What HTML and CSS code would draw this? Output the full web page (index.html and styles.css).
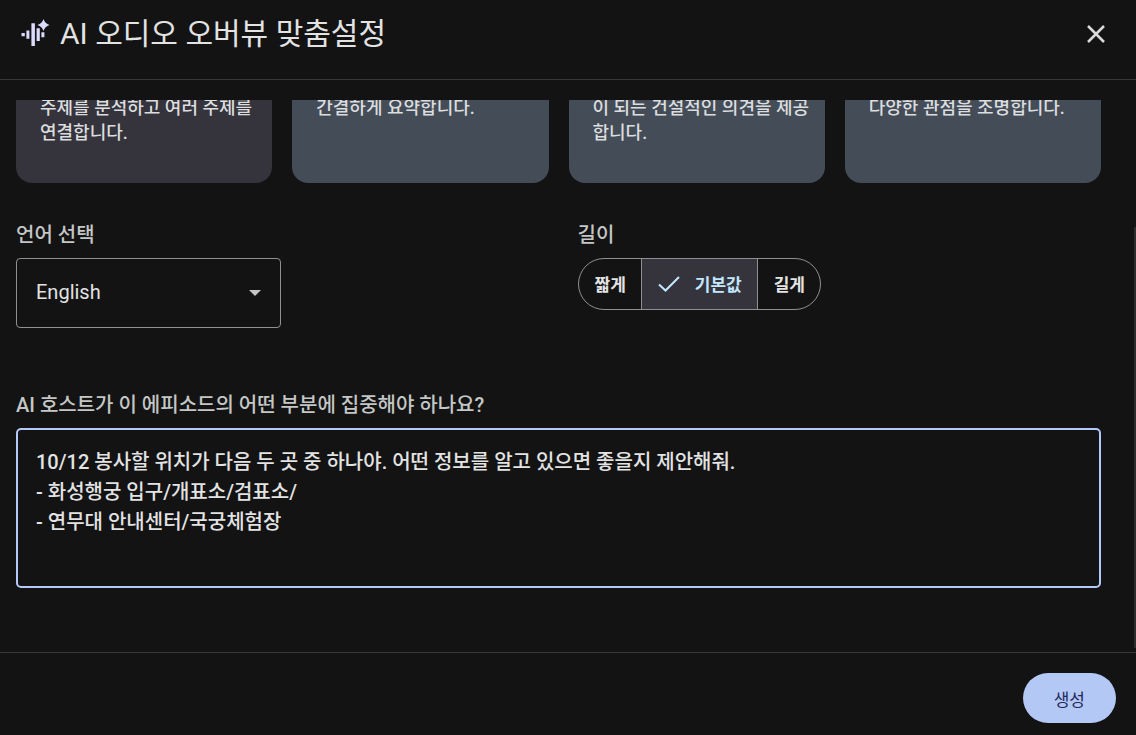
FILE: index.html
```html
<!DOCTYPE html>
<html lang="ko">
<head>
<meta charset="utf-8">
<meta name="viewport" content="width=device-width, initial-scale=1">
<title>AI 오디오 오버뷰 맞춤설정</title>
<link rel="stylesheet" href="styles.css">
</head>
<body>
<form class="dialog">
  <header class="dialog-header">
    <svg class="logo" viewBox="0 0 30 30" aria-hidden="true">
      <path d="M1.5 14h3.3v3.3H1.5zM6.4 11.5h3v8.2h-3zM11.4 4.2h3.5v22.8h-3.5zM16.6 9.2h3.2v12.8h-3.2zM21.4 13.2h3v5h-3z"/>
      <path d="M23.5 0Q24.9 4.6 29.5 6Q24.9 7.4 23.5 12Q22.1 7.4 17.5 6Q22.1 4.6 23.5 0z"/>
    </svg>
    <h1 class="title">AI 오디오 오버뷰 맞춤설정</h1>
    <button class="close" type="button" aria-label="닫기">
      <svg viewBox="0 0 20 20" aria-hidden="true"><path d="M2 2l16 16M18 2L2 18"/></svg>
    </button>
  </header>
  <main class="dialog-body">
    <div class="cards">
      <button class="card card-selected" type="button">주제를 분석하고 여러 주제를 연결합니다.</button>
      <button class="card" type="button">간결하게 요약합니다.</button>
      <button class="card" type="button">이 되는 건설적인 의견을 제공합니다.</button>
      <button class="card" type="button">다양한 관점을 조명합니다.</button>
    </div>
    <div class="options">
      <div class="field">
        <label class="label" for="language">언어 선택</label>
        <div class="select-wrap">
          <select class="select" id="language"><option>English</option></select>
          <svg class="arrow" viewBox="0 0 12 6" aria-hidden="true"><path d="M0 0h12L6 6z"/></svg>
        </div>
      </div>
      <div class="field">
        <span class="label" id="length-label">길이</span>
        <div class="segments" role="radiogroup" aria-labelledby="length-label">
          <label class="segment"><input class="radio" type="radio" name="length">짧게</label>
          <label class="segment segment-on"><input class="radio" type="radio" name="length" checked><svg class="check" viewBox="0 0 22 18" aria-hidden="true"><path d="M1 10.5l6.5 6L21 3"/></svg>기본값</label>
          <label class="segment"><input class="radio" type="radio" name="length">길게</label>
        </div>
      </div>
    </div>
    <div class="field prompt">
      <label class="label" for="focus">AI 호스트가 이 에피소드의 어떤 부분에 집중해야 하나요?</label>
      <textarea class="textarea" id="focus" rows="4">10/12 봉사할 위치가 다음 두 곳 중 하나야. 어떤 정보를 알고 있으면 좋을지 제안해줘.
- 화성행궁 입구/개표소/검표소/
- 연무대 안내센터/국궁체험장</textarea>
    </div>
    <div class="scroll-thumb"></div>
  </main>
  <footer class="dialog-footer">
    <button class="submit" type="submit">생성</button>
  </footer>
</form>
</body>
</html>
```

FILE: styles.css
```css
* { box-sizing: border-box; }
body {
  margin: 0;
  background: #131314;
  color: #e3e3e3;
  font-family: Roboto, "Noto Sans CJK KR", sans-serif;
  font-size: 20px;
}
button, select, textarea { font: inherit; color: inherit; }
.dialog { display: flex; flex-direction: column; min-height: 100vh; }
.dialog-header {
  display: flex;
  align-items: center;
  gap: 10px;
  padding: 12px 30px 24px 20px;
  border-bottom: 1px solid #37383a;
}
.logo { width: 30px; height: 30px; fill: #dcdaff; }
.title { flex: 1; margin: 0; font-size: 30px; line-height: 43px; font-weight: 400; }
.close { display: flex; padding: 0; border: 0; background: none; }
.close svg { width: 20px; height: 20px; fill: none; stroke: #dadad8; stroke-width: 2.5; }
.dialog-body {
  flex: 1;
  position: relative;
  margin-top: 20px;
  padding: 0 35px 64px 16px;
  overflow: hidden;
}
.cards { display: grid; grid-template-columns: repeat(4, 1fr); gap: 20px; margin-top: -24px; }
.card {
  display: flex;
  height: 107px;
  padding: 19px 12px 18px 24px;
  border: 0;
  border-radius: 16px;
  background: #434c57;
  color: #dcdddf;
  font-size: 18px;
  font-weight: 500;
  line-height: 25px;
  text-align: left;
}
.card-selected { background: #35343c; }
.options { display: grid; grid-template-columns: 1fr 1fr; gap: 38px; margin-top: 37px; }
.field { display: flex; flex-direction: column; align-items: flex-start; gap: 8px; }
.label { color: #c4c7c5; font-size: 20px; line-height: 30px; font-weight: 500; }
.select-wrap { position: relative; width: 265px; }
.select {
  width: 100%;
  height: 70px;
  padding: 0 19px 2px;
  border: 1px solid #8e918f;
  border-radius: 4px;
  background: #131314;
  appearance: none;
}
.arrow { position: absolute; top: 32px; right: 20px; width: 12px; height: 6px; fill: #c4c7c5; }
.segments {
  display: flex;
  height: 52px;
  border: 1px solid #8e918f;
  border-radius: 26px;
  overflow: hidden;
}
.segment {
  position: relative;
  display: flex;
  align-items: center;
  padding: 0 15px 2px 16px;
  font-size: 17px;
  font-weight: 700;
}
.segment-on {
  border: solid #8e918f;
  border-width: 0 1px;
  background: #35343c;
  color: #c2e7ff;
}
.radio { position: absolute; inset: 0; margin: 0; opacity: 0; }
.check { width: 22px; height: 18px; margin-right: 15px; fill: none; stroke: #c2e7ff; stroke-width: 2; }
.prompt { align-items: stretch; margin-top: 62px; }
.textarea {
  display: block;
  width: 100%;
  height: 160px;
  padding: 17px 18px;
  border: 2px solid #b4c8fa;
  border-radius: 5px;
  outline: 0;
  background: #131314;
  font-weight: 500;
  line-height: 30px;
  resize: none;
}
.scroll-thumb { position: absolute; top: 127px; right: 0; bottom: 4px; width: 2px; background: #2d2e30; }
.dialog-footer { display: flex; justify-content: flex-end; padding: 20px 20px 12px; border-top: 1px solid #37383a; }
.submit {
  height: 50px;
  padding: 0 31px;
  border: 0;
  border-radius: 25px;
  background: #b4c8f5;
  color: #1f2a5c;
  font-size: 17px;
  font-weight: 400;
}
```
